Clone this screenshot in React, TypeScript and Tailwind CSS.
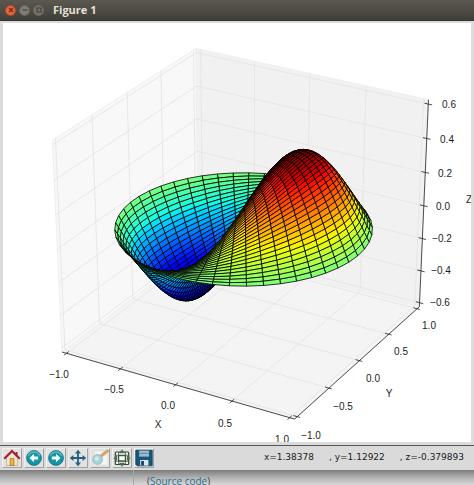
import type { ReactNode } from 'react';

type Vec = [number, number, number];

const ELEV = (29.4 * Math.PI) / 180;
const AZIM = (-60 * Math.PI) / 180;
const DIST = 10;
const EYE: Vec = [Math.cos(ELEV) * Math.cos(AZIM), Math.cos(ELEV) * Math.sin(AZIM), Math.sin(ELEV)];
const RIGHT: Vec = [-Math.sin(AZIM), Math.cos(AZIM), 0];
const UP: Vec = [-Math.sin(ELEV) * Math.cos(AZIM), -Math.sin(ELEV) * Math.sin(AZIM), Math.cos(ELEV)];

const dot = (a: Vec, b: Vec) => a[0] * b[0] + a[1] * b[1] + a[2] * b[2];

// Unit-cube coordinates (centred on zero) to drawing coordinates.
function project(p: Vec): [number, number] {
  const w = 1 - dot(EYE, p) / DIST;
  return [243.6 + (257.5 * dot(RIGHT, p)) / w, 227 - (230.5 * dot(UP, p)) / w];
}

const pts = (ps: Vec[]) => ps.map((p) => project(p).map((n) => n.toFixed(2)).join(',')).join(' ');

// Bessel function of the first kind, order one, by its power series.
function j1(x: number): number {
  let term = x / 2;
  let sum = term;
  for (let k = 1; k < 20; k++) {
    term *= (-x * x) / 4 / (k * (k + 1));
    sum += term;
  }
  return sum;
}

const clamp = (v: number) => Math.max(0, Math.min(1, v));

function jet(t: number): string {
  const r = t < 0.89 ? clamp((t - 0.35) / 0.31) : 1 - (t - 0.89) / 0.22;
  const g = t < 0.5 ? clamp((t - 0.125) / 0.25) : clamp((0.91 - t) / 0.27);
  const b = t < 0.11 ? 0.5 + t / 0.22 : clamp((0.65 - t) / 0.31);
  return `rgb(${Math.round(r * 255)},${Math.round(g * 255)},${Math.round(b * 255)})`;
}

const N = 50;

function height(r: number, theta: number) {
  return Math.cos(0.5) * Math.cos(theta) * j1(3.8317 * r);
}

function buildSurface() {
  const grid: Vec[][] = [];
  for (let i = 0; i < N; i++) {
    const r = i / (N - 1);
    const row: Vec[] = [];
    for (let j = 0; j < N; j++) {
      const a = (2 * Math.PI * j) / (N - 1);
      row.push([(r * Math.cos(a)) / 2, (r * Math.sin(a)) / 2, height(r, a) / 1.2]);
    }
    grid.push(row);
  }
  const faces: { points: string; depth: number; fill: string }[] = [];
  for (let i = 0; i < N - 1; i++) {
    for (let j = 0; j < N - 1; j++) {
      const quad = [grid[i][j], grid[i + 1][j], grid[i + 1][j + 1], grid[i][j + 1]];
      const z = quad.reduce((s, p) => s + p[2], 0) / 4;
      const depth = quad.reduce((s, p) => s + dot(EYE, p), 0) / 4;
      faces.push({ points: pts(quad), depth, fill: jet(clamp((z * 1.2) / 1.02 + 0.5)) });
    }
  }
  return faces.sort((a, b) => a.depth - b.depth);
}

const SURFACE = buildSurface();

const H = 0.5 + 0.25 / 12;
const T = 1 / 12;
const XY_TICKS = [-0.5, -0.25, 0, 0.25, 0.5];
const Z_TICKS = [-3, -2, -1, 0, 1, 2, 3].map((n) => n / 6);

const GRID: Vec[][] = [
  ...XY_TICKS.map((v): Vec[] => [[v, H, H], [v, H, -H], [v, -H, -H]]),
  ...XY_TICKS.map((v): Vec[] => [[-H, v, H], [-H, v, -H], [H, v, -H]]),
  ...Z_TICKS.map((v): Vec[] => [[-H, -H, v], [-H, H, v], [H, H, v]]),
];

const AXES: Vec[][] = [
  [[-H, -H, -H], [H, -H, -H]],
  [[H, -H, -H], [H, H, -H]],
  [[H, H, -H], [H, H, H]],
  ...XY_TICKS.map((v): Vec[] => [[v, -H - 0.2 * T, -H], [v, -H + 0.2 * T, -H]]),
  ...XY_TICKS.map((v): Vec[] => [[H + 0.15 * T, v, -H], [H - 0.2 * T, v, -H]]),
  ...Z_TICKS.map((v): Vec[] => [[H + 0.2 * T, H, v], [H - 0.2 * T, H, v]]),
];

const PANES: { fill: string; corners: Vec[] }[] = [
  { fill: '#f8f8f8', corners: [[-H, -H, -H], [-H, H, -H], [-H, H, H], [-H, -H, H]] },
  { fill: '#f1f1f1', corners: [[-H, H, -H], [H, H, -H], [H, H, H], [-H, H, H]] },
  { fill: '#f4f4f4', corners: [[-H, -H, -H], [H, -H, -H], [H, H, -H], [-H, H, -H]] },
];

const LABELS: [string, number, number][] = [
  ['−1.0', 59, 378], ['−0.5', 114, 393], ['0.0', 168, 409], ['0.5', 225, 427], ['1.0', 282, 443],
  ['−1.0', 311, 439], ['−0.5', 343, 410], ['0.0', 373, 382], ['0.5', 401, 355], ['1.0', 429, 329],
  ['0.6', 449, 108], ['0.4', 447, 143], ['0.2', 445, 177], ['0.0', 443, 210],
  ['−0.2', 442, 242], ['−0.4', 441, 274], ['−0.6', 440, 306],
  ['X', 158, 428], ['Y', 389, 397], ['Z', 469, 203],
];

function Plot() {
  return (
    <svg viewBox="3 23 468 419" className="block h-auto w-full bg-white" role="img" aria-label="3D surface">
      {PANES.map((p) => (
        <polygon key={p.fill} points={pts(p.corners)} fill={p.fill} stroke="#efefef" strokeWidth="1" />
      ))}
      {GRID.map((line, i) => (
        <polyline key={i} points={pts(line)} fill="none" stroke="#e4e4e4" strokeWidth="0.9" />
      ))}
      {AXES.map((line, i) => (
        <polyline key={i} points={pts(line)} fill="none" stroke="#222" strokeWidth="0.8" />
      ))}
      {SURFACE.map((f, i) => (
        <polygon key={i} points={f.points} fill={f.fill} stroke="#000" strokeWidth="0.8" strokeLinejoin="round" />
      ))}
      <g className="font-['Liberation_Sans',Arial,sans-serif] text-[10px]" fill="#1c1c1c" textAnchor="middle">
        {LABELS.map(([text, x, y], i) => (
          <text key={i} x={x} y={y}>{text}</text>
        ))}
      </g>
    </svg>
  );
}

function HomeIcon() {
  return (
    <svg viewBox="0 0 18 18" className="size-[18px]">
      <path d="M12.5 3h2v4h-2z" fill="#9c2330" />
      <path d="M3.5 9 9 3.5 14.5 9v7.5h-11z" fill="#f1e6d0" stroke="#a99c80" strokeWidth=".6" />
      <path d="M7.2 9.5h3.8v7H7.2z" fill="#f0b23e" stroke="#a46b1c" strokeWidth=".7" />
      <path d="M1.2 9.7 9 2l7.8 7.7" fill="none" stroke="#a31f34" strokeWidth="2" />
    </svg>
  );
}

function ArrowIcon({ back = false }: { back?: boolean }) {
  return (
    <svg viewBox="0 0 18 18" className="size-[18px]">
      <circle cx="9" cy="9" r="7.4" fill="#1595a3" stroke="#0c6c7c" strokeWidth=".8" />
      <path d="M3.2 7a6.2 6.2 0 0 1 11.6 0" fill="none" stroke="#54bcc5" strokeWidth="1.3" />
      <path
        d={back ? 'M4.4 9 9 4.8v2.6h4.2v3.2H9v2.6z' : 'M13.6 9 9 4.8v2.6H4.8v3.2H9v2.6z'}
        fill="#f2ffff"
      />
    </svg>
  );
}

function MoveIcon() {
  return (
    <svg viewBox="0 0 18 18" className="size-[18px]">
      <path d="M9 2.5v13M2.5 9h13" stroke="#245e83" strokeWidth="1.8" />
      <path d="M9 .8 12 4.4H6zM9 17.2 12 13.6H6zM.8 9 4.4 6v6zM17.2 9 13.6 6v6z" fill="#245e83" />
    </svg>
  );
}

function ZoomIcon() {
  return (
    <svg viewBox="0 0 18 18" className="size-[18px]">
      <path d="M4 2.5h12.5v13H4z" fill="#f5f5f2" />
      <path d="m10 7 6.5-5" stroke="#d9a565" strokeWidth="3" strokeLinecap="round" />
      <circle cx="6.6" cy="10.5" r="4.8" fill="#a9d4dc" stroke="#91b6bf" strokeWidth="1" />
      <circle cx="5.7" cy="9.6" r="2" fill="#d5edf0" />
    </svg>
  );
}

function SubplotsIcon() {
  return (
    <svg viewBox="0 0 18 18" className="size-[18px]">
      <rect x="2.3" y="3" width="13.4" height="12.5" rx="1" fill="#f5f7f4" stroke="#344139" strokeWidth="1.2" />
      <path d="M2.5 6.2h13M2.5 12.3h13M5.6 3v12.5M12.4 3v12.5" stroke="#4b574e" strokeWidth=".8" />
      <rect x="5.7" y="6.7" width="6.6" height="5.2" fill="#fff" stroke="#28362d" />
      <path d="m9 .7 2.6 3.3H6.4zM9 17.4l2.6-3.3H6.4zM.7 9.2 4 6.8v4.8zM17.3 9.2 14 6.8v4.8z" fill="#3d8a45" stroke="#25542b" strokeWidth=".4" />
    </svg>
  );
}

function SaveIcon() {
  return (
    <svg viewBox="0 0 18 18" className="size-[18px]">
      <path d="M.8 1.2h16.4v15.6H2.2L.8 15.2z" fill="#17567d" stroke="#0c3a5a" strokeWidth=".8" />
      <path d="M4.2 1.6h9.8v6H4.2z" fill="#9dbccb" />
      <path d="M4.2 4.4h9.8" stroke="#527f97" strokeWidth=".8" />
      <path d="M5.2 11h8.2v5.6H5.2z" fill="#dbe6ea" />
      <path d="M6.2 12h2.7v4.6H6.2z" fill="#123c59" />
    </svg>
  );
}

const TOOLS: { label: string; icon: ReactNode }[] = [
  { label: 'Home', icon: <HomeIcon /> },
  { label: 'Back', icon: <ArrowIcon back /> },
  { label: 'Forward', icon: <ArrowIcon /> },
  { label: 'Pan', icon: <MoveIcon /> },
  { label: 'Zoom', icon: <ZoomIcon /> },
  { label: 'Subplots', icon: <SubplotsIcon /> },
  { label: 'Save', icon: <SaveIcon /> },
];

function TitleBar() {
  return (
    <header className="flex h-5 items-center gap-[3px] bg-linear-to-b from-[#5b594f] to-[#403e38] pl-[5px]">
      <button aria-label="Close" className="grid size-[11px] place-items-center rounded-full border border-[#a9492a] bg-[#e9663c]">
        <svg viewBox="0 0 8 8" className="size-2"><path d="m2 2 4 4M6 2 2 6" stroke="#6e2c16" strokeWidth="1.3" /></svg>
      </button>
      <button aria-label="Minimize" className="grid size-[11px] place-items-center rounded-full border border-[#65635b] bg-[#807e74]">
        <svg viewBox="0 0 8 8" className="size-2"><path d="M1.5 4h5" stroke="#45433d" strokeWidth="1.2" /></svg>
      </button>
      <button aria-label="Maximize" className="grid size-[11px] place-items-center rounded-full border border-[#6b6960] bg-[#74726a]">
        <svg viewBox="0 0 8 8" className="size-2"><path d="M2 2h4v4H2z" fill="none" stroke="#3f3d38" strokeWidth="1.1" /></svg>
      </button>
      <h1 className="pl-[6px] font-['Open_Sans','Noto_Sans',sans-serif] text-[11px] leading-5 font-bold text-[#e3e0d8]">Figure 1</h1>
    </header>
  );
}

function Toolbar() {
  return (
    <div className="flex h-[25px] items-center justify-between border-t border-[#555] bg-[#dadada] pr-[10px] pl-[2px]">
      <div className="flex gap-[2px]">
        {TOOLS.map((t) => (
          <button
            key={t.label}
            aria-label={t.label}
            className="grid size-5 place-items-center border border-t-[#efefef] border-r-[#a2a2a2] border-b-[#a2a2a2] border-l-[#efefef] bg-[#e2e2e2]"
          >
            {t.icon}
          </button>
        ))}
      </div>
      <div className="flex gap-[15px] font-['DejaVu_Sans',sans-serif] text-[9px] whitespace-nowrap text-[#222]">
        <span>x=1.38378</span>
        <span>, y=1.12922</span>
        <span>, z=-0.379893</span>
      </div>
    </div>
  );
}

export default function App() {
  return (
    <div className="h-screen overflow-hidden bg-[#f0f0f0]">
      <TitleBar />
      <main className="border-t border-[#33322e] bg-[#dcdcdc] pt-[2px] pr-[3px] pb-[3px] pl-[3px]">
        <Plot />
      </main>
      <Toolbar />
      <div className="flex h-4 bg-linear-to-b from-[#7d7d7d] via-[#b4b4b4] to-[#dedede]">
        <div className="w-[134px] shrink-0 border-r border-[#a5a5a5]" />
        <p className="pt-1 pl-[13px] font-['Open_Sans','Noto_Sans',sans-serif] text-[10px] leading-[14px] whitespace-nowrap text-[#444]">
          (<a href="#source" className="text-[#2a6f8f]">Source code</a>)
        </p>
      </div>
    </div>
  );
}
